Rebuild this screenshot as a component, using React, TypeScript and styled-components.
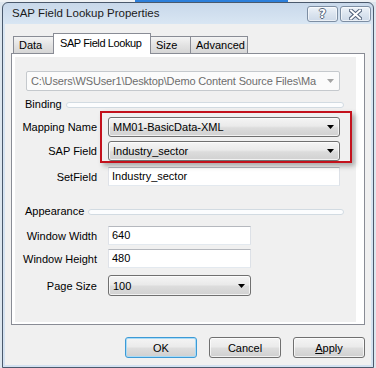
import React from 'react';
import styled, { createGlobalStyle } from 'styled-components';

const GlobalStyle = createGlobalStyle`
  html, body {
    margin: 0;
    padding: 0;
  }
  body {
    width: 376px;
    height: 368px;
    overflow: hidden;
    background: #dde6ee;
    font-family: 'Liberation Sans', Arial, sans-serif;
    font-size: 11px;
    color: #000;
  }
`;

const Desktop = styled.div`
  display: flex;
  flex-direction: column;
`;

const TopStrip = styled.div`
  display: flex;
  height: 2px;
`;

const StripPart = styled.div<{ $w: number; $color: string }>`
  width: ${(p) => p.$w}px;
  background: ${(p) => p.$color};
`;

const Window = styled.div`
  margin-left: 2px;
  width: 372px;
  height: 366px;
  box-sizing: border-box;
  border: 1px solid #4a596c;
  border-radius: 6px 6px 0 0;
  background: linear-gradient(#c8d8ea, #d9e6f3 21px, #d3e1f0);
  padding: 0 2px 2px 2px;
  display: flex;
  flex-direction: column;
`;

const TitleBar = styled.div`
  height: 21px;
  display: flex;
  align-items: flex-start;
  padding-left: 7px;
`;

const Title = styled.div`
  flex: 1;
  padding-top: 4px;
  font-size: 11.5px;
  color: #1b1b1b;
`;

const CaptionButtons = styled.div`
  display: flex;
  gap: 2px;
  margin-top: 3px;
`;

const CaptionButton = styled.div`
  width: 31px;
  height: 16px;
  box-sizing: border-box;
  border: 1px solid #7d8ea3;
  border-radius: 3px;
  background: linear-gradient(#eef3f9, #dbe4ef 50%, #cdd9e8);
  box-shadow: inset 0 0 0 1px rgba(255, 255, 255, 0.6);
  display: flex;
  align-items: center;
  justify-content: center;
`;

const HelpGlyph = styled.span`
  font-family: 'DejaVu Sans', sans-serif;
  font-weight: bold;
  font-size: 12px;
  line-height: 12px;
  color: #fff;
  text-shadow: 1px 0 0 #56667a, -1px 0 0 #56667a, 0 1px 0 #56667a, 0 -1px 0 #56667a;
`;

const Client = styled.div`
  flex: 1;
  background: #f0f0f0;
  padding: 9px 6px 0 6px;
  display: flex;
  flex-direction: column;
`;

const TabStrip = styled.div`
  display: flex;
  align-items: flex-end;
  height: 20px;
  padding-left: 2px;
  position: relative;
  z-index: 1;
`;

const Tab = styled.div<{ $w: number; $active?: boolean }>`
  width: ${(p) => p.$w}px;
  height: ${(p) => (p.$active ? 21 : 17)}px;
  margin-left: -1px;
  margin-bottom: ${(p) => (p.$active ? -1 : 0)}px;
  box-sizing: border-box;
  border: 1px solid #898c95;
  border-bottom: none;
  background: ${(p) => (p.$active ? '#fff' : 'linear-gradient(#f4f4f4, #e3e3e3 50%, #d6d6d6)')};
  padding-left: ${(p) => (p.$active ? 6 : 5)}px;
  line-height: ${(p) => (p.$active ? 18 : 16)}px;
  letter-spacing: ${(p) => (p.$active ? -0.4 : 0)}px;
  white-space: nowrap;
  overflow: hidden;
  position: relative;
  z-index: ${(p) => (p.$active ? 2 : 1)};

  &:first-child {
    margin-left: 0;
  }
`;

const Panel = styled.div`
  height: 272px;
  box-sizing: border-box;
  border: 1px solid #898c95;
  background: #fff;
  padding: 3px 8px 2px 3px;
  display: flex;
`;

const PanelBody = styled.div`
  flex: 1;
  background: #f0f0f0;
  display: flex;
  flex-direction: column;
`;

const PathCombo = styled.div`
  margin: 14px 0 0 11px;
  width: 314px;
  height: 20px;
  box-sizing: border-box;
  border: 1px solid #c5c9cd;
  border-radius: 2px;
  background: #fbfbfb;
  display: flex;
  align-items: center;
  color: #6d6d6d;
`;

const ComboText = styled.span<{ $tight?: boolean }>`
  flex: 1;
  overflow: hidden;
  white-space: nowrap;
  padding-left: 4px;
  letter-spacing: ${(p) => (p.$tight ? -0.15 : 0)}px;
`;

const Arrow = styled.svg<{ $muted?: boolean }>`
  width: 7px;
  height: 4px;
  margin: 0 5px 0 6px;
  flex: none;
  fill: ${(p) => (p.$muted ? '#a4a4a4' : '#000')};
`;

const SectionHeader = styled.div<{ $top: number }>`
  display: flex;
  align-items: center;
  height: 14px;
  margin-top: ${(p) => p.$top}px;
  padding-left: 10px;
`;

const SectionLine = styled.div`
  flex: 1;
  height: 4px;
  margin: 1px 12px 0 4px;
  border: 1px solid #d2dbe2;
  border-radius: 3px;
  background: #fcfdfe;
`;

const BindingRows = styled.div`
  position: relative;
`;

const Highlight = styled.div`
  position: absolute;
  left: 85px;
  top: 0;
  width: 252px;
  height: 52px;
  box-sizing: border-box;
  border: 2px solid #c3111c;
  box-shadow: 3px 3px 5px rgba(0, 0, 0, 0.3);
  pointer-events: none;
`;

const FieldRow = styled.div<{ $top: number }>`
  display: flex;
  align-items: center;
  margin-top: ${(p) => p.$top}px;
`;

const Label = styled.div`
  width: 82px;
  text-align: right;
  white-space: nowrap;
  margin-right: 11px;
`;

const TextBox = styled.div<{ $w: number }>`
  width: ${(p) => p.$w}px;
  height: 19px;
  box-sizing: border-box;
  border: 1px solid;
  border-color: #b5b8be #dde1e7 #e3e9ef #dfe2e8;
  background: #fff;
  padding-left: 3px;
  line-height: 17px;
`;

const DropDown = styled.div<{ $w: number; $h: number }>`
  width: ${(p) => p.$w}px;
  height: ${(p) => p.$h}px;
  box-sizing: border-box;
  border: 1px solid #707070;
  border-radius: 3px;
  background: linear-gradient(#f5f5f5, #eaeaea 45%, #dcdcdc 55%, #d1d1d1);
  box-shadow: inset 0 0 0 1px rgba(255, 255, 255, 0.7);
  display: flex;
  align-items: center;
`;

const ButtonRow = styled.div`
  display: flex;
  justify-content: flex-end;
  gap: 12px;
  margin-top: 12px;
`;

const DialogButton = styled.div<{ $default?: boolean }>`
  width: 72px;
  height: 21px;
  box-sizing: border-box;
  border: 1px solid ${(p) => (p.$default ? '#3c9ad6' : '#707070')};
  border-radius: 3px;
  background: linear-gradient(#f4f4f4, #ebebeb 45%, #dddddd 55%, #cfcfcf);
  box-shadow: inset 0 0 0 1px ${(p) => (p.$default ? '#a9dbf6' : 'rgba(255, 255, 255, 0.7)')};
  display: flex;
  align-items: center;
  justify-content: center;
`;

const AccessKey = styled.span`
  text-decoration: underline;
`;

const DownArrow = ({ muted }: { muted?: boolean }) => (
  <Arrow $muted={muted} viewBox="0 0 7 4">
    <polygon points="0,0 7,0 3.5,4" />
  </Arrow>
);

const CloseIcon = () => (
  <svg width="13" height="11" viewBox="0 0 13 11">
    <path d="M2 1.5 L11 9.5 M11 1.5 L2 9.5" stroke="#52627a" strokeWidth="4" strokeLinecap="square" />
    <path d="M2 1.5 L11 9.5 M11 1.5 L2 9.5" stroke="#fff" strokeWidth="2" strokeLinecap="square" />
  </svg>
);

const tabs = [
  { label: 'Data', w: 41 },
  { label: 'SAP Field Lookup', w: 98, active: true },
  { label: 'Size', w: 41 },
  { label: 'Advanced', w: 58 },
];

export default function App() {
  return (
    <>
      <GlobalStyle />
      <Desktop>
        <TopStrip>
          <StripPart $w={135} $color="#eef1f4" />
          <StripPart $w={153} $color="#2c7fdb" />
          <StripPart $w={88} $color="#eef1f4" />
        </TopStrip>
        <Window>
          <TitleBar>
            <Title>SAP Field Lookup Properties</Title>
            <CaptionButtons>
              <CaptionButton>
                <HelpGlyph>?</HelpGlyph>
              </CaptionButton>
              <CaptionButton>
                <CloseIcon />
              </CaptionButton>
            </CaptionButtons>
          </TitleBar>
          <Client>
            <TabStrip>
              {tabs.map((t) => (
                <Tab key={t.label} $w={t.w} $active={t.active}>
                  {t.label}
                </Tab>
              ))}
            </TabStrip>
            <Panel>
              <PanelBody>
                <PathCombo>
                  <ComboText $tight>C:\Users\WSUser1\Desktop\Demo Content Source Files\Ma</ComboText>
                  <DownArrow muted />
                </PathCombo>

                <SectionHeader $top={6}>
                  Binding
                  <SectionLine />
                </SectionHeader>

                <BindingRows>
                  <FieldRow $top={6}>
                    <Label>Mapping Name</Label>
                    <DropDown $w={232} $h={20}>
                      <ComboText>MM01-BasicData-XML</ComboText>
                      <DownArrow />
                    </DropDown>
                  </FieldRow>
                  <FieldRow $top={4}>
                    <Label>SAP Field</Label>
                    <DropDown $w={232} $h={20}>
                      <ComboText>Industry_sector</ComboText>
                      <DownArrow />
                    </DropDown>
                  </FieldRow>
                  <Highlight />
                </BindingRows>
                <FieldRow $top={6}>
                  <Label>SetField</Label>
                  <TextBox $w={232}>Industry_sector</TextBox>
                </FieldRow>

                <SectionHeader $top={18}>
                  Appearance
                  <SectionLine />
                </SectionHeader>

                <FieldRow $top={8}>
                  <Label>Window Width</Label>
                  <TextBox $w={143}>640</TextBox>
                </FieldRow>
                <FieldRow $top={4}>
                  <Label>Window Height</Label>
                  <TextBox $w={143}>480</TextBox>
                </FieldRow>
                <FieldRow $top={7}>
                  <Label>Page Size</Label>
                  <DropDown $w={143} $h={21}>
                    <ComboText>100</ComboText>
                    <DownArrow />
                  </DropDown>
                </FieldRow>
              </PanelBody>
            </Panel>
            <ButtonRow>
              <DialogButton $default>OK</DialogButton>
              <DialogButton>Cancel</DialogButton>
              <DialogButton>
                <span>
                  <AccessKey>A</AccessKey>pply
                </span>
              </DialogButton>
            </ButtonRow>
          </Client>
        </Window>
      </Desktop>
    </>
  );
}
